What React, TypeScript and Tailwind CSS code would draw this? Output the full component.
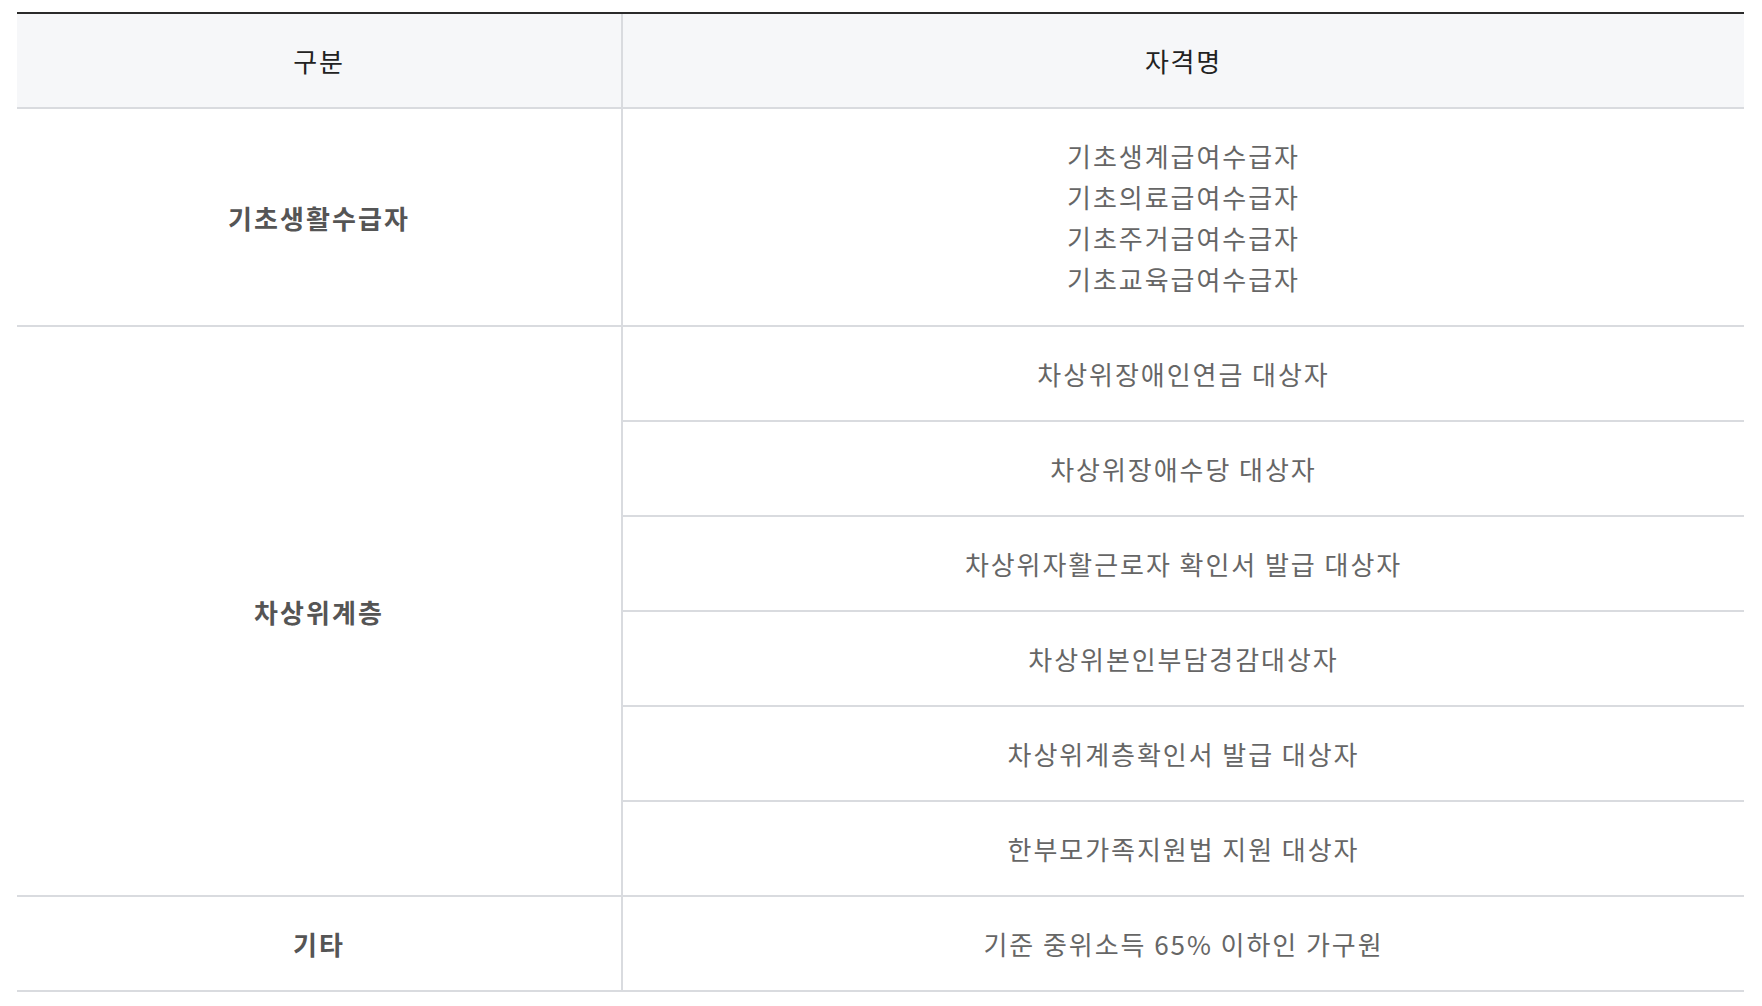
import React from 'react';

const font = { fontFamily: "'Noto Sans CJK KR', 'Noto Sans', sans-serif" };

interface Group {
  label: string;
  items: string[][]; // each sub-row holds one or more lines
}

const groups: Group[] = [
  {
    label: '기초생활수급자',
    items: [['기초생계급여수급자', '기초의료급여수급자', '기초주거급여수급자', '기초교육급여수급자']],
  },
  {
    label: '차상위계층',
    items: [
      ['차상위장애인연금 대상자'],
      ['차상위장애수당 대상자'],
      ['차상위자활근로자 확인서 발급 대상자'],
      ['차상위본인부담경감대상자'],
      ['차상위계층확인서 발급 대상자'],
      ['한부모가족지원법 지원 대상자'],
    ],
  },
  {
    label: '기타',
    items: [['기준 중위소득 65% 이하인 가구원']],
  },
];

export default function App() {
  return (
    <div className="min-h-screen bg-white pt-[12px] pl-[17px] pr-[18px]" style={font}>
      <div className="border-t-2 border-[#2b2b2b]">
        {/* Header */}
        <div className="grid grid-cols-[606px_1fr] bg-[#f6f7f9] border-b-2 border-[#d9dbdf]">
          <div className="h-[93px] flex items-center justify-center border-r-2 border-[#d9dbdf] text-[26px] tracking-[0.07em] text-[#222]">
            구분
          </div>
          <div className="h-[93px] flex items-center justify-center text-[26px] tracking-[0.07em] text-[#222]">
            자격명
          </div>
        </div>

        {/* Body */}
        {groups.map((g) => (
          <div key={g.label} className="grid grid-cols-[606px_1fr] border-b-2 border-[#d9dbdf]">
            <div className="flex items-center justify-center border-r-2 border-[#d9dbdf] text-[26px] tracking-[0.08em] font-bold text-[#555]">
              {g.label}
            </div>
            <div className="flex flex-col">
              {g.items.map((lines, i) => {
                const last = i === g.items.length - 1;
                return (
                  <div
                    key={i}
                    className={`flex flex-col items-center justify-center text-[26px] tracking-[0.075em] text-[#666] ${
                      lines.length > 1 ? 'py-[26px] leading-[41px]' : last ? 'h-[93px]' : 'h-[95px] border-b-2 border-[#d9dbdf]'
                    }`}
                  >
                    {lines.map((l) => (
                      <span key={l}>{l}</span>
                    ))}
                  </div>
                );
              })}
            </div>
          </div>
        ))}
      </div>
    </div>
  );
}
